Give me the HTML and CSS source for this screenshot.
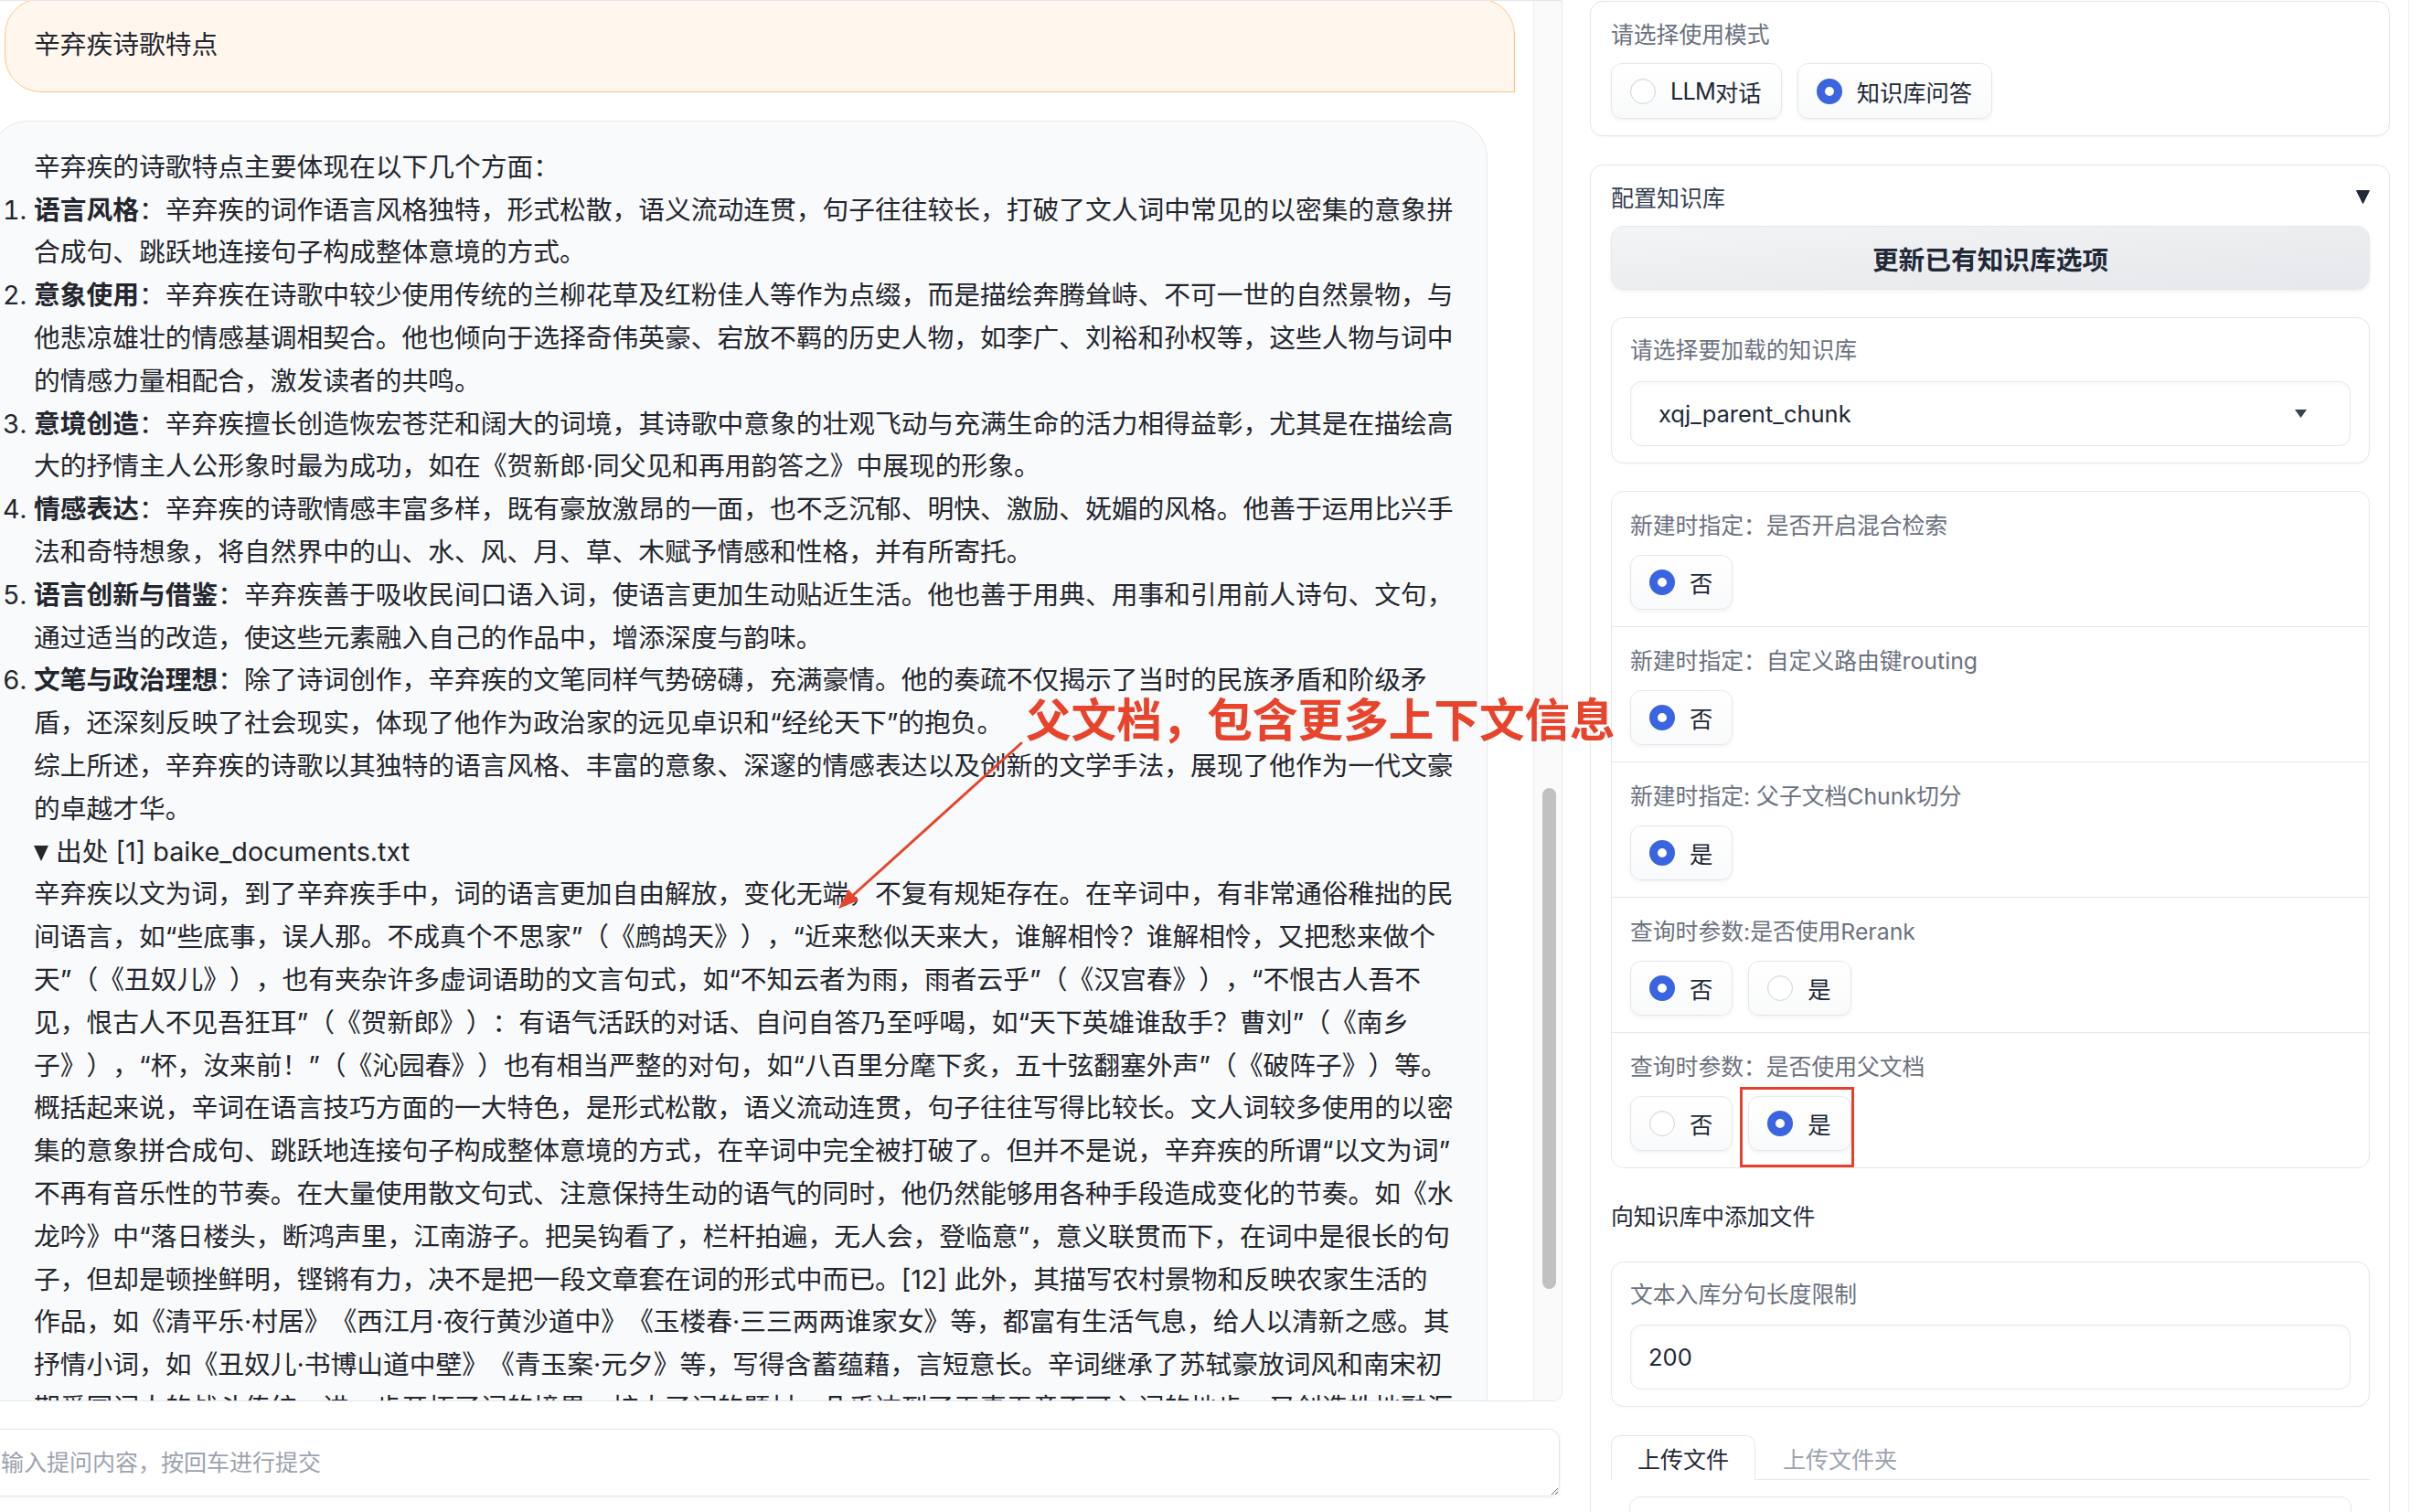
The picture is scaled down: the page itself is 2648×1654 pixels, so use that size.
FILE: index.html
```html
<!DOCTYPE html>
<html lang="zh-CN">
<head>
<meta charset="utf-8">
<title>知识库问答</title>
<link rel="stylesheet" href="styles.css">
</head>
<body>
<div class="app">
  <div class="main-col">
    <div class="chatbot">
      <div class="messages">
        <div class="msg user">辛弃疾诗歌特点</div>
        <div class="msg bot">
          <p>辛弃疾的诗歌特点主要体现在以下几个方面：</p>
          <ol>
            <li><strong>语言风格</strong>：辛弃疾的词作语言风格独特，形式松散，语义流动连贯，句子往往较长，打破了文人词中常见的以密集的意象拼<br>合成句、跳跃地连接句子构成整体意境的方式。</li>
            <li><strong>意象使用</strong>：辛弃疾在诗歌中较少使用传统的兰柳花草及红粉佳人等作为点缀，而是描绘奔腾耸峙、不可一世的自然景物，与<br>他悲凉雄壮的情感基调相契合。他也倾向于选择奇伟英豪、宕放不羁的历史人物，如李广、刘裕和孙权等，这些人物与词中<br>的情感力量相配合，激发读者的共鸣。</li>
            <li><strong>意境创造</strong>：辛弃疾擅长创造恢宏苍茫和阔大的词境，其诗歌中意象的壮观飞动与充满生命的活力相得益彰，尤其是在描绘高<br>大的抒情主人公形象时最为成功，如在《贺新郎·同父见和再用韵答之》中展现的形象。</li>
            <li><strong>情感表达</strong>：辛弃疾的诗歌情感丰富多样，既有豪放激昂的一面，也不乏沉郁、明快、激励、妩媚的风格。他善于运用比兴手<br>法和奇特想象，将自然界中的山、水、风、月、草、木赋予情感和性格，并有所寄托。</li>
            <li><strong>语言创新与借鉴</strong>：辛弃疾善于吸收民间口语入词，使语言更加生动贴近生活。他也善于用典、用事和引用前人诗句、文句，<br>通过适当的改造，使这些元素融入自己的作品中，增添深度与韵味。</li>
            <li><strong>文笔与政治理想</strong>：除了诗词创作，辛弃疾的文笔同样气势磅礴，充满豪情。他的奏疏不仅揭示了当时的民族矛盾和阶级矛<br>盾，还深刻反映了社会现实，体现了他作为政治家的远见卓识和“经纶天下”的抱负。</li>
          </ol>
          <p>综上所述，辛弃疾的诗歌以其独特的语言风格、丰富的意象、深邃的情感表达以及创新的文学手法，展现了他作为一代文豪<br>的卓越才华。</p>
          <details open class="source">
            <summary><svg class="src-tri" width="16" height="17" viewBox="0 0 16 17"><polygon points="0,0 16,0 8,17" fill="#27272a"/></svg>出处 [1] baike_documents.txt</summary>
            <p>辛弃疾以文为词，到了辛弃疾手中，词的语言更加自由解放，变化无端，不复有规矩存在。在辛词中，有非常通俗稚拙的民<br>间语言，如“些底事，误人那。不成真个不思家”（《鹧鸪天》），“近来愁似天来大，谁解相怜？谁解相怜，又把愁来做个<br>天”（《丑奴儿》），也有夹杂许多虚词语助的文言句式，如“不知云者为雨，雨者云乎”（《汉宫春》），“不恨古人吾不<br>见，恨古人不见吾狂耳”（《贺新郎》）：有语气活跃的对话、自问自答乃至呼喝，如“天下英雄谁敌手？曹刘”（《南乡<br>子》），“杯，汝来前！”（《沁园春》）也有相当严整的对句，如“八百里分麾下炙，五十弦翻塞外声”（《破阵子》）等。<br>概括起来说，辛词在语言技巧方面的一大特色，是形式松散，语义流动连贯，句子往往写得比较长。文人词较多使用的以密<br>集的意象拼合成句、跳跃地连接句子构成整体意境的方式，在辛词中完全被打破了。但并不是说，辛弃疾的所谓“以文为词”<br>不再有音乐性的节奏。在大量使用散文句式、注意保持生动的语气的同时，他仍然能够用各种手段造成变化的节奏。如《水<br>龙吟》中“落日楼头，断鸿声里，江南游子。把吴钩看了，栏杆拍遍，无人会，登临意”，意义联贯而下，在词中是很长的句<br>子，但却是顿挫鲜明，铿锵有力，决不是把一段文章套在词的形式中而已。[12] 此外，其描写农村景物和反映农家生活的<br>作品，如《清平乐·村居》《西江月·夜行黄沙道中》《玉楼春·三三两两谁家女》等，都富有生活气息，给人以清新之感。其<br>抒情小词，如《丑奴儿·书博山道中壁》《青玉案·元夕》等，写得含蓄蕴藉，言短意长。辛词继承了苏轼豪放词风和南宋初<br>期爱国词人的战斗传统，进一步开拓了词的境界，扩大了词的题材，几乎达到了无事无意不可入词的地步，又创造性地融汇了</p>
          </details>
        </div>
      </div>
      <div class="scroll-track"><div class="thumb"></div></div>
    </div>
    <textarea class="prompt" placeholder="输入提问内容，按回车进行提交"></textarea>
  </div>

  <aside class="sidebar">
    <section class="card mode-card">
      <div class="field-label">请选择使用模式</div>
      <div class="radio-row">
        <label class="radio"><span class="dot"></span><span class="latin">LLM</span>对话</label>
        <label class="radio"><span class="dot on"></span>知识库问答</label>
      </div>
    </section>

    <section class="card accordion">
      <div class="acc-head">
        <span>配置知识库</span>
        <svg class="acc-caret" width="15" height="15" viewBox="0 0 15 15"><polygon points="0.5,0.5 14.5,0.5 7.5,14.5" fill="#1f2937" stroke="#1f2937" stroke-linejoin="round"/></svg>
      </div>
      <button class="btn">更新已有知识库选项</button>

      <div class="block">
        <div class="field-label">请选择要加载的知识库</div>
        <div class="input dropdown">
          <span>xqj_parent_chunk</span>
          <svg width="13" height="9" viewBox="0 0 13 9"><polygon points="0,0 13,0 6.5,9" fill="#374151"/></svg>
        </div>
      </div>

      <div class="group">
        <div class="group-row">
          <div class="field-label">新建时指定：是否开启混合检索</div>
          <div class="radio-row"><label class="radio"><span class="dot on"></span>否</label></div>
        </div>
        <div class="group-row">
          <div class="field-label">新建时指定：自定义路由键routing</div>
          <div class="radio-row"><label class="radio"><span class="dot on"></span>否</label></div>
        </div>
        <div class="group-row">
          <div class="field-label">新建时指定: 父子文档Chunk切分</div>
          <div class="radio-row"><label class="radio"><span class="dot on"></span>是</label></div>
        </div>
        <div class="group-row">
          <div class="field-label">查询时参数:是否使用Rerank</div>
          <div class="radio-row">
            <label class="radio"><span class="dot on"></span>否</label>
            <label class="radio"><span class="dot"></span>是</label>
          </div>
        </div>
        <div class="group-row">
          <div class="field-label">查询时参数：是否使用父文档</div>
          <div class="radio-row">
            <label class="radio"><span class="dot"></span>否</label>
            <label class="radio"><span class="dot on"></span>是</label>
          </div>
        </div>
      </div>

      <div class="md">向知识库中添加文件</div>

      <div class="block">
        <div class="field-label">文本入库分句长度限制</div>
        <div class="input num">200</div>
      </div>

      <div class="tabs">
        <div class="tab-bar">
          <div class="tab active">上传文件</div>
          <div class="tab">上传文件夹</div>
        </div>
        <div class="tab-panel"><div class="upload"></div></div>
      </div>
    </section>
  </aside>
</div>

<div class="note">父文档，包含更多上下文信息</div>
<svg class="overlay" width="2648" height="1654" viewBox="0 0 2648 1654">
  <line x1="1117" y1="813" x2="930" y2="982" stroke="#e8432b" stroke-width="3" stroke-linecap="round"/>
  <polygon points="917,994 939,985 928,973" fill="#e8432b"/>
</svg>
<div class="highlight"></div>
</body>
</html>
```

FILE: styles.css
```css
* { box-sizing: border-box; }

html, body {
  margin: 0;
  padding: 0;
}

body {
  width: 2648px;
  height: 1654px;
  overflow: hidden;
  position: relative;
  background: #ffffff;
  color: #1f2937;
  font-family: "Inter", "Noto Sans CJK SC", sans-serif;
  text-spacing-trim: space-all;
}

.app {
  display: flex;
  align-items: flex-start;
  height: 1654px;
  overflow: hidden;
}

/* ---------- left: chat ---------- */
.main-col {
  flex: none;
  width: 1733px;
  margin-left: -24px;
  display: flex;
  flex-direction: column;
  gap: 30px;
}

.chatbot {
  height: 1533px;
  display: flex;
  border: 1px solid #e5e7eb;
  border-radius: 0 0 10px 10px;
  background: #ffffff;
  overflow: hidden;
}

.messages {
  flex: 1;
  min-width: 0;
  overflow: hidden;
}

.msg {
  font-size: 28.75px;
  line-height: 46.8px;
  color: #23262e;
}

.msg.user {
  margin: -3px 0 0 28px;
  width: 1652px;
  padding: 27px 31px;
  background: #fff7ed;
  border: 1px solid #f8c58a;
  border-radius: 40px 40px 0 40px;
}

.msg.bot {
  margin: 31px 0 0 13px;
  width: 1637px;
  padding: 27px 21px 27px 46px;
  background: #f9fafb;
  border: 1px solid #e5e7eb;
  border-radius: 40px;
}

.msg p,
.msg ol {
  margin: 0;
}

.msg ol {
  padding-left: 0;
}

.msg strong {
  font-weight: 700;
}

.source summary {
  list-style: none;
  display: block;
}

.source summary::-webkit-details-marker {
  display: none;
}

.src-tri {
  margin-right: 8px;
}

.scroll-track {
  flex: none;
  width: 31px;
  border-left: 1px solid #ececec;
  background: #fafafa;
  padding: 861px 0 0 9px;
}

.thumb {
  width: 15px;
  height: 548px;
  border-radius: 8px;
  background: #c1c1c1;
}

.prompt {
  display: block;
  width: 1730px;
  height: 74px;
  padding: 21px 24px;
  border: 1px solid #e5e7eb;
  border-radius: 12px;
  background: #ffffff;
  box-shadow: 0 1px 4px rgba(0, 0, 0, 0.06);
  font-family: "Inter", "Noto Sans CJK SC", sans-serif;
  font-size: 25px;
  line-height: 30px;
  color: #1f2937;
  resize: vertical;
  outline: none;
}

.prompt::placeholder {
  color: #9ca3af;
}

/* ---------- right: sidebar ---------- */
.sidebar {
  flex: none;
  width: 926px;
  height: 1654px;
  padding: 1px 20px 0 30px;
  border-right: 1px solid #f1f1f1;
  display: flex;
  flex-direction: column;
  gap: 31px;
}

.card {
  border: 1px solid #e5e7eb;
  border-radius: 14px;
  background: #ffffff;
  box-shadow: 0 1px 3px rgba(0, 0, 0, 0.04);
}

.mode-card {
  padding: 19px 21px 18px 22px;
}

.field-label {
  font-size: 24.8px;
  line-height: 34px;
  color: #6b7280;
  white-space: nowrap;
}

.radio-row {
  display: flex;
  gap: 17px;
  margin-top: 14px;
}

.radio {
  display: inline-flex;
  align-items: center;
  gap: 16px;
  height: 61px;
  padding: 0 21px 0 20px;
  border: 1px solid #e5e7eb;
  border-radius: 12px;
  background: linear-gradient(to top, #f9fafb, #ffffff);
  box-shadow: 0 2px 4px rgba(0, 0, 0, 0.05);
  font-size: 25.3px;
  color: #1f2937;
  white-space: nowrap;
}

.radio .latin {
  letter-spacing: -0.8px;
  margin-right: -16px;
}

.dot {
  flex: none;
  width: 28px;
  height: 28px;
  border-radius: 50%;
  background: #ffffff;
  border: 1px solid #d1d5db;
  box-shadow: inset 0 1px 2px rgba(0, 0, 0, 0.05);
}

.dot.on {
  border: 9px solid #3a64e0;
  box-shadow: none;
}

.accordion {
  padding: 17px 21px 0 22px;
  display: flex;
  flex-direction: column;
}

.acc-head {
  display: flex;
  justify-content: space-between;
  align-items: center;
  height: 34px;
  font-size: 25px;
  color: #374151;
}

.btn {
  margin-top: 15px;
  height: 70px;
  width: 100%;
  border: 1px solid #e7e8eb;
  border-radius: 14px;
  background: linear-gradient(to bottom right, #f3f4f6, #e6e7ea);
  box-shadow: 0 2px 4px rgba(0, 0, 0, 0.06);
  font-family: "Inter", "Noto Sans CJK SC", sans-serif;
  font-size: 28.7px;
  font-weight: 700;
  color: #1f2937;
}

.block {
  margin-top: 30px;
  border: 1px solid #e5e7eb;
  border-radius: 14px;
  padding: 18px 20px;
  background: #ffffff;
  box-shadow: 0 1px 3px rgba(0, 0, 0, 0.03);
}

.input {
  height: 71px;
  margin-top: 17px;
  border: 1px solid #e5e7eb;
  border-radius: 12px;
  background: #ffffff;
  box-shadow: inset 0 2px 4px rgba(0, 0, 0, 0.03);
  display: flex;
  align-items: center;
  font-size: 25.5px;
  color: #1f2937;
}

.dropdown {
  justify-content: space-between;
  padding: 0 47px 0 30px;
}

.num {
  margin-top: 16px;
  padding: 0 19px;
}

.group {
  margin-top: 30px;
  border: 1px solid #e5e7eb;
  border-radius: 14px;
  overflow: hidden;
  background: #e5e7eb;
  display: flex;
  flex-direction: column;
  gap: 1px;
}

.group-row {
  background: #ffffff;
  padding: 20px 20px 18px;
}

.group-row .radio-row {
  margin-top: 15px;
}

.group-row .radio {
  height: 60px;
}

.md {
  margin-top: 30px;
  height: 42px;
  display: flex;
  align-items: center;
  font-size: 24.8px;
  color: #1f2937;
}

.tabs {
  margin-top: 31px;
}

.tab-bar {
  display: flex;
  border-bottom: 1px solid #e5e7eb;
}

.tab {
  height: 49px;
  padding: 0 29px;
  display: flex;
  align-items: center;
  font-size: 25px;
  color: #9ca3af;
  border: 1px solid transparent;
  margin-bottom: -1px;
}

.tab.active {
  padding: 0 28px;
  border-color: #e5e7eb;
  border-bottom-color: #ffffff;
  border-radius: 10px 10px 0 0;
  background: #ffffff;
  color: #1f2937;
}

.tab-panel {
  padding: 18px 20px 0;
}

.upload {
  height: 220px;
  border: 1px solid #e5e7eb;
  border-radius: 12px;
}

/* ---------- annotations drawn over the screenshot ---------- */
.note {
  position: absolute;
  left: 1122px;
  top: 760px;
  font-family: "Noto Sans CJK SC", sans-serif;
  font-size: 49.6px;
  font-weight: 700;
  line-height: 1;
  color: #e8432b;
  white-space: nowrap;
}

.overlay {
  position: absolute;
  left: 0;
  top: 0;
  pointer-events: none;
}

.highlight {
  position: absolute;
  left: 1903px;
  top: 1189px;
  width: 125px;
  height: 88px;
  border: 3px solid #e5412d;
}
```
